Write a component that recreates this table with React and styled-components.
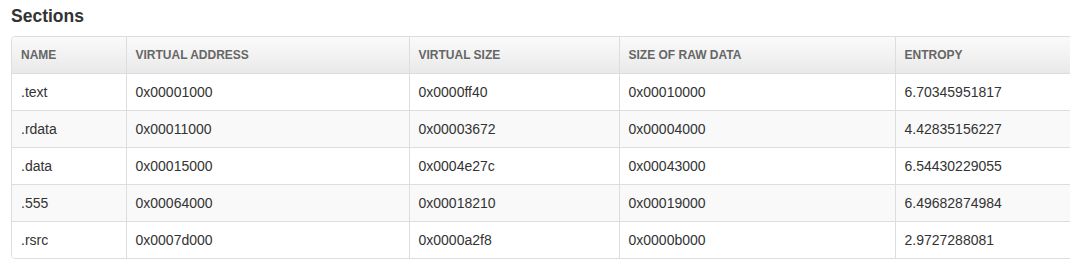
import React from 'react';
import styled, { createGlobalStyle } from 'styled-components';

const sections = [
  { name: '.text', va: '0x00001000', vs: '0x0000ff40', raw: '0x00010000', entropy: '6.70345951817' },
  { name: '.rdata', va: '0x00011000', vs: '0x00003672', raw: '0x00004000', entropy: '4.42835156227' },
  { name: '.data', va: '0x00015000', vs: '0x0004e27c', raw: '0x00043000', entropy: '6.54430229055' },
  { name: '.555', va: '0x00064000', vs: '0x00018210', raw: '0x00019000', entropy: '6.49682874984' },
  { name: '.rsrc', va: '0x0007d000', vs: '0x0000a2f8', raw: '0x0000b000', entropy: '2.9727288081' },
];

const columns = [
  { label: 'Name', width: 114 },
  { label: 'Virtual Address', width: 283 },
  { label: 'Virtual Size', width: 210 },
  { label: 'Size of Raw Data', width: 276 },
  { label: 'Entropy', width: 201 },
];

const App = () => {
  return (
    <>
      <GlobalStyle />
      <Page>
        <Title>Sections</Title>
        <TableBox>
          <Table>
            <colgroup>
              {columns.map((c) => (
                <col key={c.label} style={{ width: c.width }} />
              ))}
            </colgroup>
            <thead>
              <tr>
                {columns.map((c) => (
                  <HeadCell key={c.label}>{c.label}</HeadCell>
                ))}
              </tr>
            </thead>
            <tbody>
              {sections.map((s, i) => (
                <Row key={s.name} $striped={i % 2 === 1}>
                  <Cell>{s.name}</Cell>
                  <Cell>{s.va}</Cell>
                  <Cell>{s.vs}</Cell>
                  <Cell>{s.raw}</Cell>
                  <Cell>{s.entropy}</Cell>
                </Row>
              ))}
            </tbody>
          </Table>
        </TableBox>
      </Page>
    </>
  );
};

export default App;

const GlobalStyle = createGlobalStyle`
  body {
    margin: 0;
    background: #fff;
    overflow: hidden;
    font-family: "Liberation Sans", Arial, sans-serif;
    color: #333;
  }
`;

const Page = styled.div`
  padding: 6px 0 0 11px;
  width: 1090px;
`;

const Title = styled.h4`
  margin: 0 0 10px;
  font-size: 17.5px;
  line-height: 20px;
  font-weight: bold;
  color: #333;
`;

const TableBox = styled.div`
  width: 1084px;
  border: 1px solid #dddddd;
  border-radius: 4px;
  overflow: hidden;
`;

const Table = styled.table`
  width: 100%;
  border-collapse: collapse;
  table-layout: fixed;
  font-size: 14px;
  line-height: 20px;
`;

const HeadCell = styled.th`
  padding: 8px 8px 8px 9px;
  text-align: left;
  font-size: 12px;
  font-weight: bold;
  text-transform: uppercase;
  color: #666;
  background: linear-gradient(to bottom, #fafafa 0%, #e9e9e9 100%);
  border-left: 1px solid #dddddd;
  white-space: nowrap;
  &:first-child {
    border-left: none;
  }
`;

const Row = styled.tr`
  background: ${(p) => (p.$striped ? '#f9f9f9' : '#ffffff')};
`;

const Cell = styled.td`
  padding: 8px 8px 8px 9px;
  color: #333;
  border-top: 1px solid #dddddd;
  border-left: 1px solid #dddddd;
  white-space: nowrap;
  &:first-child {
    border-left: none;
  }
`;
